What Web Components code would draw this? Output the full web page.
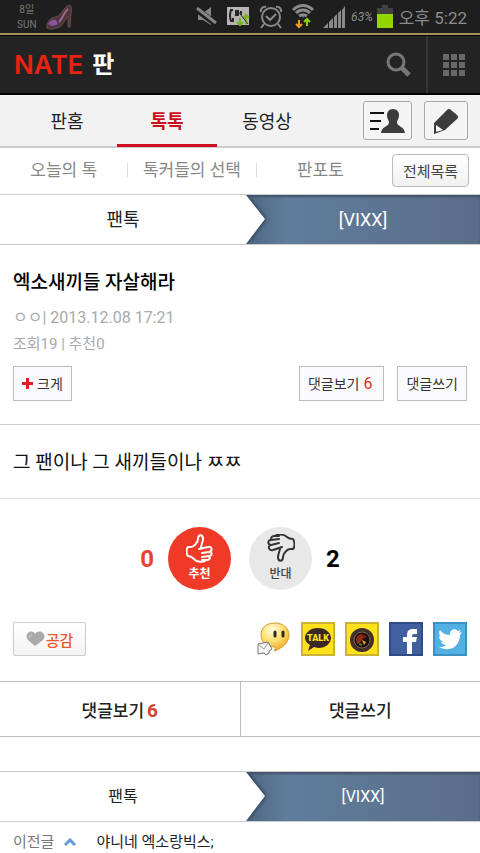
<!DOCTYPE html>
<html lang="ko">
<head>
<meta charset="utf-8">
<meta name="viewport" content="width=device-width, initial-scale=1">
<title>네이트 판</title>
<style>
    body {
        margin: 0;
        background: #fff;
        color: #222;
        font-family: Roboto, "Noto Sans CJK KR", sans-serif;
        font-size: 16px;
    }
</style>
</head>
<body>
<pan-app></pan-app>

<script>
const ICONS = {
    shoe: `<svg width="28" height="28" viewBox="0 0 28 28"><path d="M2 22c1-5 5-8 9-8 5-1 7-9 13-12 3 1 3 5 2 8l-1 14h-2V13c-3 3-5 10-9 11-4 2-9 3-12 1z" fill="#4c3340" stroke="#6e5148"/><path d="M3 21c2-4 5-5 8-4l2 4c-3 2-7 3-10 0z" fill="#85549a"/><path d="M14 19c4-4 5-10 9-13" stroke="#9a6a82" stroke-width="2" fill="none"/></svg>`,
    mute: `<svg width="22" height="20" viewBox="0 0 22 20"><path d="M2 6h5l8-6v18l-8-5H2z" fill="#858585"/><path d="M0 2l20 15" stroke="#1e1e1e" stroke-width="6"/><path d="M1 1l19 15" stroke="#858585" stroke-width="3"/></svg>`,
    cast: `<svg width="23" height="20" viewBox="0 0 23 20"><path d="M0 0h22v18H0z" fill="#b4b4b4"/><path d="M6 3H4q-2 6 0 11h2v-3M9 9V4h2v5M14 4v4" stroke="#262626" stroke-width="2" fill="none"/><path d="M13 11v7m-3-3 3 3 3-3M19 17V8m-3 3 3-3 3 3" stroke="#78b51a" stroke-width="2" fill="none"/><path d="M10 3l11 14" stroke="#303030" stroke-width="1"/></svg>`,
    alarm: `<svg width="24" height="24" viewBox="0 0 24 24" fill="none" stroke="#8a8a8a" stroke-width="2"><circle cx="12" cy="12" r="9"/><path d="M7 11l4 4 6-6M5 19l-3 4m17-4 3 4M2 7c-1-3 2-6 5-5m15 5c1-3-2-6-5-5"/></svg>`,
    wifi: `<svg width="22" height="25" viewBox="0 0 22 25" fill="none"><path d="M1 6c6-6 14-6 20 0M4 9c4-4 10-4 14 0M7 12c3-2 5-2 8 0" stroke="#8a8a8a" stroke-width="3"/><path d="M10 12h2l-1 2z" fill="#8a8a8a"/><path d="M7 16v7m-3-3 3 3 3-3" stroke="#f39a2b" stroke-width="2"/><path d="M15 22v-7m-3 3 3-3 3 3" stroke="#8dcc12" stroke-width="2"/></svg>`,
    signal: `<svg width="23" height="22" viewBox="0 0 23 22" fill="#8a8a8a"><path d="M0 22l5-5v5zM6 16l4-4v10H6zM11 11l3-3v14h-3zM15 7l3-3v18h-3zM19 4l3-4v22h-3z"/></svg>`,
    battery: `<svg width="16" height="24" viewBox="0 0 16 24"><path d="M5 0h6v3h5v6H0V3h5z" fill="#424242"/><path d="M0 9h16v14H0z" fill="#93d500"/></svg>`,
    search: `<svg width="26" height="26" viewBox="0 0 26 26" fill="none" stroke="#777"><circle cx="10" cy="10" r="8" stroke-width="3"/><path d="M15 15l2 2" stroke-width="3"/><path d="M16 16l7 7" stroke-width="5"/></svg>`,
    grid: `<svg width="22" height="22" viewBox="0 0 22 22" fill="#696969"><path d="M0 0h6v6H0zM8 0h6v6H8zM16 0h6v6h-6zM0 8h6v6H0zM8 8h6v6H8zM16 8h6v6h-6zM0 16h6v6H0zM8 16h6v6H8zM16 16h6v6h-6z"/></svg>`,
    profile: `<svg width="35" height="26" viewBox="0 0 35 26" fill="#3c3c3c"><path d="M0 4h14v2H0zM0 12h11v2H0zM0 20h9v2H0z" fill="#111"/><path d="M23 1c4 0 6 3 6 6 0 4-2 5-2 8 1 4 7 3 8 10H11c1-7 7-6 8-10 0-3-2-4-2-8 0-3 2-6 6-6z"/></svg>`,
    pencil: `<svg width="26" height="26" viewBox="0 0 26 26"><path d="M1 15L14 2q2-2 4 0l6 5q2 2 0 4L12 22 1 26z" fill="#3c3c3c"/><path d="M3 17l7 5-7 2z" fill="#f6f6f6"/><path d="M1 22l3 2-3 2z" fill="#3c3c3c"/></svg>`,
    plus: `<svg width="11" height="11" viewBox="0 0 11 11"><path d="M4 0h3v4h4v3H7v4H4V7H0V4h4z" fill="#e21b22"/></svg>`,
    up: `<svg width="28" height="29" viewBox="0 0 28 29" fill="none" stroke="#fff" stroke-width="2" stroke-linejoin="round" stroke-linecap="round"><path d="M2 13h3c3 0 7-5 7-8 0-5 5-5 5 0 0 3-2 6-2 9M13 15l9-2c4-1 5 4 1 5l-7 1M23 18c4 0 3 4 0 4l-7 1M22 22c3 1 2 4-1 4l-5 0M20 26c-2 3-10 2-12-1-2-2-4-3-6-3-2-2-2-7 0-9"/></svg>`,
    down: `<svg width="28" height="29" viewBox="0 0 28 29" fill="none" stroke="#333" stroke-width="2" stroke-linejoin="round" stroke-linecap="round"><path d="M26 15h-3c-3 0-7 5-7 8 0 5-5 5-5 0 0-3 2-6 2-9M15 13l-9 3c-4 1-6-4-2-5l8-2M4 11C0 10 1 6 4 6l8-1M5 6c-2-2 0-4 2-4h5M8 2c2-2 9-2 12 1 2 2 4 2 6 2 2 3 2 8 0 10"/></svg>`,
    heart: `<svg width="19" height="16" viewBox="0 0 19 16"><path d="M9 15L2 9c-5-6 4-12 7-6 4-6 13 0 8 6z" fill="#aaa"/><path d="M3 7q0-3 3-3" stroke="#ccc" fill="none"/></svg>`,
    nateon: `<svg width="34" height="34" viewBox="0 0 34 34"><defs><radialGradient id="g" cx=".4" cy=".25" r=".8"><stop offset="0" stop-color="#fffbe0"/><stop offset=".5" stop-color="#ffdf70"/><stop offset="1" stop-color="#eda11d"/></radialGradient></defs><path d="M18 1c9 0 14 6 14 12s-5 13-15 16c1-2 2-3 1-4C9 25 4 20 4 13S9 1 18 1z" fill="url(#g)" stroke="#d99a2b"/><path d="M18 10v4M26 10v4" stroke="#33281c" stroke-width="3" stroke-linecap="round"/><path d="M1 22l10-2 4 7-3 2v2l-3 2-2-2-6 1z" fill="#f5f5f5" stroke="#777"/><path d="M2 23l5 4 4-6" fill="none" stroke="#999"/></svg>`,
    talk: `<svg width="34" height="34" viewBox="0 0 34 34"><path d="M1 1h32v32H1z" fill="#ffe11c" stroke="#c9b236" stroke-width="2"/><path d="M17 6c8 0 13 5 13 10s-5 10-13 10l-4-1-6 4 2-6c-3-2-5-4-5-7C4 11 9 6 17 6z" fill="#382723"/><text x="17" y="19" text-anchor="middle" font-family="Roboto, sans-serif" font-weight="900" font-size="9" fill="#ffe11c">TALK</text></svg>`,
    story: `<svg width="34" height="34" viewBox="0 0 34 34"><path d="M1 1h32v32H1z" fill="#ffe11c" stroke="#c9b236" stroke-width="2"/><circle cx="17" cy="18" r="12" fill="#403029"/><circle cx="17" cy="18" r="8" fill="#1d0c09" stroke="#7c6654"/><path d="M11 18q1-6 6-6l2 3-4 6-3 1z" fill="#8f2c17"/><path d="M18 12l4 3-3 2z" fill="#702315"/><path d="M17 18l4 2-2 3z" fill="#e9ad27"/><path d="M14 22l3 1" stroke="#5a6e2b" stroke-width="2"/></svg>`,
    facebook: `<svg width="34" height="34" viewBox="0 0 34 34"><path d="M1 1h32v32H1z" fill="#41609f" stroke="#304c87" stroke-width="2"/><path d="M18 32V20h-4v-5h4v-2c0-4 2-6 6-6h4v5h-3q-2 0-2 2v1h5l-1 5h-4v12z" fill="#fff"/></svg>`,
    twitter: `<svg width="34" height="34" viewBox="0 0 34 34"><path d="M1 1h32v32H1z" fill="#52b0e4" stroke="#3b91c5" stroke-width="2"/><path transform="translate(5 6)" d="M24 4l-3 1 2-3-3 1c-4-4-9 0-8 4C8 7 4 5 2 2c-2 3 0 6 1 7L1 8c0 3 2 5 4 6H3c1 2 3 3 5 3-2 2-5 2-7 2 11 6 21-1 21-12z" fill="#fff"/></svg>`,
    prev: `<svg width="12" height="8" viewBox="0 0 12 8"><path d="M1 7l5-5 5 5" fill="none" stroke="#6699dd" stroke-width="3"/></svg>`
};

const RESET = `
    * { box-sizing: border-box; }
    :host { display: block; }
    a { color: inherit; text-decoration: none; }
    button { font: inherit; color: inherit; margin: 0; padding: 0; cursor: pointer; }
`;

class PanElement extends HTMLElement {
    constructor() {
        super();
        this.attachShadow({ mode: 'open' });
        const template = document.createElement('template');
        template.innerHTML = `<style>${RESET}${this.styles()}</style>${this.markup()}`;
        this.shadowRoot.appendChild(template.content.cloneNode(true));
    }

    styles() { return ''; }
    markup() { return '<slot></slot>'; }
}

class PanIcon extends HTMLElement {
    constructor() {
        super();
        this.attachShadow({ mode: 'open' });
    }

    connectedCallback() {
        this.shadowRoot.innerHTML = `
            <style>
                :host { display: inline-flex; flex: none; }
                svg { display: block; }
            </style>
            ${ICONS[this.getAttribute('name')] || ''}
        `;
    }
}

class StatusBar extends PanElement {
    styles() {
        return `
            :host { background: #1e1e1e; color: #8c8c8c; border-bottom: 2px solid #a3915a; }
            .bar { display: flex; align-items: center; height: 33px; padding: 0 13px 0 17px; }
            .date { font-size: 10px; line-height: 15px; text-align: center; margin-right: 8px; color: #777; }
            .date span { display: block; }
            .icons { display: flex; align-items: center; margin-left: auto; gap: 9px; }
            .level { display: flex; align-items: center; gap: 4px; margin-left: -4px; font-size: 12px; font-style: italic; }
            .time { font-size: 17px; margin-left: -3px; white-space: nowrap; }
        `;
    }

    markup() {
        return `
            <div class="bar">
                <div class="date"><span>8일</span><span>SUN</span></div>
                <pan-icon name="shoe"></pan-icon>
                <div class="icons">
                    <pan-icon name="mute"></pan-icon>
                    <pan-icon name="cast"></pan-icon>
                    <pan-icon name="alarm"></pan-icon>
                    <pan-icon name="wifi"></pan-icon>
                    <pan-icon name="signal"></pan-icon>
                    <div class="level"><span>63%</span><pan-icon name="battery"></pan-icon></div>
                    <span class="time">오후 5:22</span>
                </div>
            </div>
        `;
    }
}

class SiteHeader extends PanElement {
    styles() {
        return `
            :host { background: #232323; border-top: 1px solid #000; border-bottom: 2px solid #000; }
            header { display: flex; align-items: stretch; height: 57px; }
            .logo { display: flex; align-items: center; gap: 9px; padding-left: 14px; margin-right: auto; }
            .nate { color: #e62310; font: 600 26px Inter, sans-serif; }
            .pan { color: #fff; font-size: 24px; font-weight: 700; line-height: 30px; }
            button { display: flex; align-items: center; justify-content: center; width: 54px; background: none; border: 0; }
            .menu { border-left: 2px solid #383838; }
        `;
    }

    markup() {
        return `
            <header>
                <a class="logo" href="#"><span class="nate">NATE</span><span class="pan">판</span></a>
                <button type="button" aria-label="검색"><pan-icon name="search"></pan-icon></button>
                <button type="button" class="menu" aria-label="메뉴"><pan-icon name="grid"></pan-icon></button>
            </header>
        `;
    }
}

class TabBar extends PanElement {
    styles() {
        return `
            :host { background: #f2f2f2; border-bottom: 2px solid #ccc; }
            nav { display: flex; align-items: center; height: 51px; padding: 0 12px 0 17px; }
            .tabs { display: flex; flex: 1; margin-right: 46px; }
            a { flex: 1; text-align: center; font-size: 18px; line-height: 52px; height: 51px; margin-bottom: -2px; }
            a.on { color: #cc0f1e; font-weight: 700; border-bottom: 3px solid #cc0f1e; }
            button {
                display: flex; align-items: center; justify-content: center;
                width: 44px; height: 39px;
                background: #f4f4f4; border: 1px solid #aaa; border-radius: 3px;
            }
            .profile { width: 49px; margin-right: 12px; }
        `;
    }

    markup() {
        return `
            <nav>
                <div class="tabs">
                    <a href="#">판홈</a>
                    <a href="#" class="on">톡톡</a>
                    <a href="#">동영상</a>
                </div>
                <button type="button" class="profile" aria-label="내 정보"><pan-icon name="profile"></pan-icon></button>
                <button type="button" aria-label="글쓰기"><pan-icon name="pencil"></pan-icon></button>
            </nav>
        `;
    }
}

class SubNav extends PanElement {
    styles() {
        return `
            nav { display: flex; align-items: center; height: 46px; padding-right: 11px; padding-bottom: 2px; color: #888; }
            a { flex: 1; text-align: center; font-size: 17px; line-height: 24px; white-space: nowrap; }
            i { width: 1px; height: 14px; background: #ddd; }
            button {
                width: 77px; height: 33px; margin-left: 8px;
                background: linear-gradient(#fff, #f1f1f1);
                border: 1px solid #bbb; border-radius: 4px;
                color: #444; font-size: 15px; white-space: nowrap;
            }
        `;
    }

    markup() {
        return `
            <nav>
                <a href="#">오늘의 톡</a><i></i>
                <a href="#">톡커들의 선택</a><i></i>
                <a href="#">판포토</a>
                <button type="button">전체목록</button>
            </nav>
        `;
    }
}

class CrumbBar extends PanElement {
    styles() {
        return `
            :host { font-size: 18px; border-top: 1px solid #ccc; border-bottom: 1px solid #ccc; }
            nav { display: flex; height: 49px; line-height: 49px; text-align: center; }
            .parent { flex: 41; position: relative; }
            .current {
                flex: 39; color: #fff;
                background: linear-gradient(90deg, #4f6883, #607d9b 18%, #596d88);
                box-shadow: inset 0 2px 2px #43536a;
            }
            svg { position: absolute; left: 100%; top: 0; filter: drop-shadow(1px 0 2px #26374c); clip-path: inset(0 -8px 0 0); }
            a { display: block; }
        `;
    }

    markup() {
        return `
            <nav>
                <div class="parent">
                    <a href="#"><slot name="parent"></slot></a>
                    <svg width="19" height="49" viewBox="0 0 19 49"><path d="M0 0l19 24L0 49z" fill="#fff"/></svg>
                </div>
                <div class="current"><a href="#"><slot></slot></a></div>
            </nav>
        `;
    }
}

class BoxButton extends PanElement {
    styles() {
        return `
            button {
                display: flex; align-items: center; gap: 4px;
                height: 35px; padding: 0 8px;
                background: #fbfbfd; border: 1px solid #bbb;
                font-size: 14px; line-height: 20px; color: #333; white-space: nowrap;
            }
        `;
    }

    markup() {
        return '<button type="button"><slot></slot></button>';
    }
}

class PostHead extends PanElement {
    styles() {
        return `
            :host { padding: 23px 13px; border-bottom: 1px solid #ccc; }
            h1 { margin: 0 0 7px; font-size: 19px; line-height: 30px; font-weight: 500; color: #000; }
            p { margin: 0; font-size: 16px; line-height: 26px; color: #aaa; }
            .count { font-size: 15px; }
            .actions { display: flex; gap: 13px; margin-top: 9px; }
            .actions box-button:first-child { margin-right: auto; }
            .num { font-size: 16px; color: #d8301f; padding-right: 3px; }
        `;
    }

    markup() {
        return `
            <h1><slot name="title"></slot></h1>
            <p><slot name="meta"></slot></p>
            <p class="count"><slot name="count"></slot></p>
            <div class="actions">
                <box-button><pan-icon name="plus"></pan-icon>크게</box-button>
                <box-button>댓글보기<span class="num">6</span></box-button>
                <box-button>댓글쓰기</box-button>
            </div>
        `;
    }
}

class PostBody extends PanElement {
    styles() {
        return `
            :host { padding: 23px 13px 21px; font-size: 19px; line-height: 29px; color: #111; border-bottom: 1px solid #ddd; }
        `;
    }
}

class VoteBox extends PanElement {
    styles() {
        return `
            :host { padding: 28px 0 32px; }
            div { display: flex; justify-content: center; align-items: center; gap: 14px; }
            button {
                display: flex; flex-direction: column; align-items: center; gap: 2px;
                width: 63px; height: 63px; padding-top: 7px;
                border: 0; border-radius: 50%; background: #e8e8e8;
                font-size: 12px; line-height: 18px; color: #444; font-weight: 500;
            }
            .up { background: #ee3a26; color: #fff; font-weight: 700; margin-right: 4px; }
            b { font-size: 24px; line-height: 28px; color: #000; }
            b.red { color: #e8432f; }
        `;
    }

    markup() {
        return `
            <div>
                <b class="red">0</b>
                <button type="button" class="up"><pan-icon name="up"></pan-icon>추천</button>
                <button type="button"><pan-icon name="down"></pan-icon>반대</button>
                <b>2</b>
            </div>
        `;
    }
}

class ShareRow extends PanElement {
    styles() {
        return `
            :host { padding: 0 13px 25px; }
            div { display: flex; align-items: center; gap: 10px; }
            .like {
                display: flex; align-items: center; justify-content: center; gap: 1px;
                width: 73px; height: 34px; margin-right: auto;
                background: linear-gradient(#fff, #f3f3f3);
                border: 1px solid #ccc; border-radius: 2px;
                color: #ec5a2b; font-size: 15px; font-weight: 500;
            }
            a { display: flex; }
        `;
    }

    markup() {
        return `
            <div>
                <button type="button" class="like"><pan-icon name="heart"></pan-icon>공감</button>
                <a href="#" aria-label="네이트온"><pan-icon name="nateon"></pan-icon></a>
                <a href="#" aria-label="카카오톡"><pan-icon name="talk"></pan-icon></a>
                <a href="#" aria-label="카카오스토리"><pan-icon name="story"></pan-icon></a>
                <a href="#" aria-label="페이스북"><pan-icon name="facebook"></pan-icon></a>
                <a href="#" aria-label="트위터"><pan-icon name="twitter"></pan-icon></a>
            </div>
        `;
    }
}

class ReplyBar extends PanElement {
    styles() {
        return `
            :host { border-top: 1px solid #bbb; border-bottom: 1px solid #bbb; margin-bottom: 34px; }
            div { display: flex; }
            button {
                flex: 1; height: 54px; border: 0; background: #fff;
                font-size: 17px; font-weight: 500; color: #222;
            }
            button:first-child { border-right: 1px solid #bbb; }
            b { color: #d8402c; font-size: 19px; margin-left: 3px; }
        `;
    }

    markup() {
        return `
            <div>
                <button type="button">댓글보기<b>6</b></button>
                <button type="button">댓글쓰기</button>
            </div>
        `;
    }
}

class PrevPost extends PanElement {
    styles() {
        return `
            a { display: flex; align-items: center; padding: 9px 13px 0; font-size: 15px; line-height: 22px; }
            .label { color: #777; margin-right: 10px; }
            .title { margin-left: 20px; }
        `;
    }

    markup() {
        return `
            <a href="#">
                <span class="label">이전글</span>
                <pan-icon name="prev"></pan-icon>
                <span class="title"><slot></slot></span>
            </a>
        `;
    }
}

class PanApp extends PanElement {
    styles() {
        return '.small { font-size: 16px; }';
    }

    markup() {
        return `
            <status-bar></status-bar>
            <site-header></site-header>
            <tab-bar></tab-bar>
            <sub-nav></sub-nav>
            <crumb-bar><span slot="parent">팬톡</span>[VIXX]</crumb-bar>
            <post-head>
                <span slot="title">엑소새끼들 자살해라</span>
                <span slot="meta">ㅇㅇ| 2013.12.08 17:21</span>
                <span slot="count">조회19 | 추천0</span>
            </post-head>
            <post-body>그 팬이나 그 새끼들이나 ㅉㅉ</post-body>
            <vote-box></vote-box>
            <share-row></share-row>
            <reply-bar></reply-bar>
            <crumb-bar class="small"><span slot="parent">팬톡</span>[VIXX]</crumb-bar>
            <prev-post>야니네 엑소랑빅스;</prev-post>
        `;
    }
}

customElements.define('pan-icon', PanIcon);
customElements.define('status-bar', StatusBar);
customElements.define('site-header', SiteHeader);
customElements.define('tab-bar', TabBar);
customElements.define('sub-nav', SubNav);
customElements.define('crumb-bar', CrumbBar);
customElements.define('box-button', BoxButton);
customElements.define('post-head', PostHead);
customElements.define('post-body', PostBody);
customElements.define('vote-box', VoteBox);
customElements.define('share-row', ShareRow);
customElements.define('reply-bar', ReplyBar);
customElements.define('prev-post', PrevPost);
customElements.define('pan-app', PanApp);
</script>
</body>
</html>
